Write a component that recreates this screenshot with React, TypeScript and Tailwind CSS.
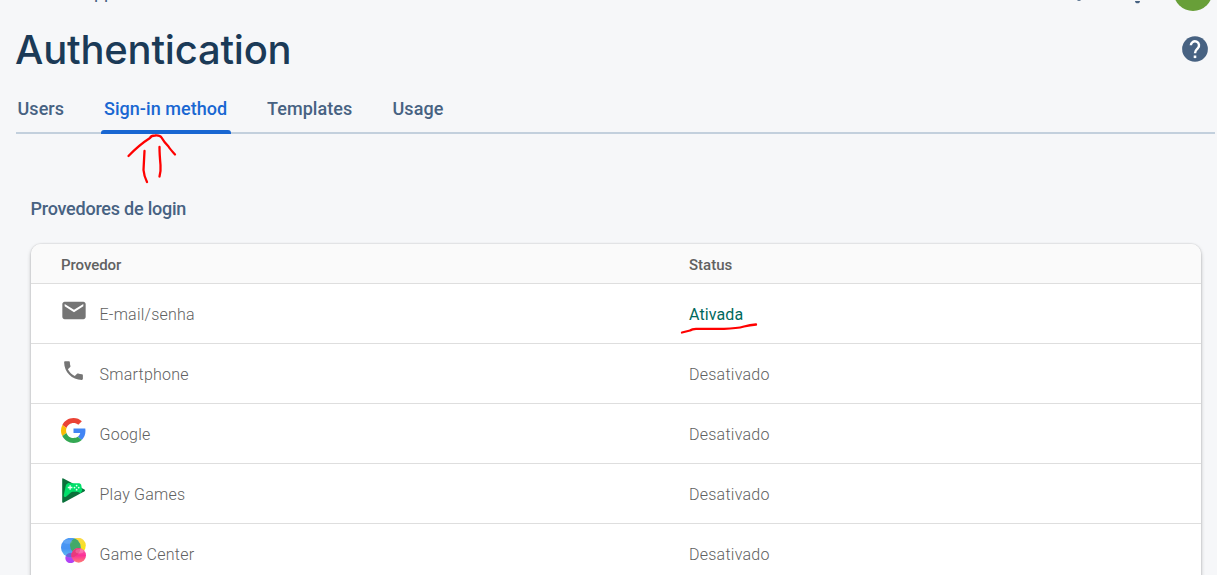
import React from "react";

const tabs = [
  { label: "Users", box: "ml-[1.500px] w-[46.500px]" },
  { label: "Sign-in method", box: "ml-[37px] w-[130px]" },
  { label: "Templates", box: "ml-[36px] w-[86px]" },
  { label: "Usage", box: "ml-[39.500px] w-[52px]" },
];

const MailIcon = () => (
  <svg viewBox="0 0 24 24" className="h-7 w-7" fill="#757575">
    <path d="M20 4H4c-1.1 0-2 .9-2 2v11c0 1.100.9 2 2 2h16c1.100 0 2-.9 2-2V6c0-1.100-.9-2-2-2zm0 4l-8 5-8-5V6l8 5 8-5v2z" />
  </svg>
);

const PhoneIcon = () => (
  <svg viewBox="0 0 24 24" className="h-[25px] w-[25px]" fill="#757575">
    <path d="M6.620 10.790c1.440 2.830 3.760 5.140 6.590 6.590l2.200-2.200c.27-.27.67-.36 1.020-.24 1.120.37 2.330.57 3.570.57.55 0 1 .45 1 1V20c0 .55-.45 1-1 1-9.390 0-17-7.610-17-17 0-.55.45-1 1-1h3.500c.55 0 1 .45 1 1 0 1.250.2 2.450.57 3.570.11.35.03.74-.25 1.020l-2.200 2.200z" />
  </svg>
);

const GoogleIcon = () => (
  <svg viewBox="0 0 48 48" className="h-[25px] w-[25px]">
    <path fill="#EA4335" d="M24 9.500c3.540 0 6.710 1.220 9.210 3.600l6.850-6.850C35.900 2.380 30.470 0 24 0 14.620 0 6.510 5.380 2.560 13.220l7.980 6.190C12.430 13.720 17.740 9.500 24 9.500z" />
    <path fill="#4285F4" d="M46.980 24.550c0-1.570-.15-3.090-.38-4.550H24v9.020h12.940c-.58 2.960-2.260 5.480-4.780 7.180l7.730 6c4.510-4.180 7.090-10.360 7.090-17.650z" />
    <path fill="#FBBC05" d="M10.530 28.590c-.48-1.450-.76-2.990-.76-4.590s.27-3.140.76-4.590l-7.980-6.190C.92 16.460 0 20.120 0 24c0 3.880.92 7.540 2.560 10.780l7.970-6.190z" />
    <path fill="#34A853" d="M24 48c6.480 0 11.930-2.130 15.890-5.810l-7.730-6c-2.150 1.450-4.920 2.300-8.160 2.300-6.260 0-11.570-4.220-13.470-9.910l-7.980 6.190C6.510 42.620 14.620 48 24 48z" />
  </svg>
);

const PlayGamesIcon = () => (
  <svg viewBox="0 0 25 25" className="h-[25px] w-[25px]">
    <path fill="#0b713b" d="M1.200 1Q1.200-.2 2.400.4L23.500 11.500Q24.500 12.400 23.500 13.200L2.400 24.700Q1.200 25 1.200 24Z" />
    <path fill="#00e06a" d="M7 5.200C8 4.700 8.500 5.300 9.500 5.300h7.800c1.200 0 2.200.4 2.900 1.500l1 5.700-1.500 2.400c-1.600.1-2.300-1.200-3.700-1.200h-4.200c-1.500 0-2.300 1.200-3.600 2.400L5 18.700c-1.200.7-2.400 0-2.200-1.800L4.700 7.900c.3-1.300 1.100-2.300 2.300-2.700z" />
    <path stroke="#e7fff2" strokeWidth="1.300" d="M9.100 7.300v4.500M6.800 9.500h4.600" />
    <g fill="#e7fff2">
      <circle cx="15.600" cy="7.600" r=".9" />
      <circle cx="15.600" cy="11.700" r=".9" />
      <circle cx="13.500" cy="9.600" r=".9" />
      <circle cx="17.700" cy="9.600" r=".9" />
    </g>
  </svg>
);

const GameCenterIcon = () => (
  <svg viewBox="0 0 25 25" className="h-[25px] w-[25px]">
    <defs>
      <linearGradient id="blue" x1="0" y1="0" x2="0" y2="1">
        <stop offset="0" stopColor="#4f9cf5" />
        <stop offset=".55" stopColor="#4793f3" />
        <stop offset="1" stopColor="#62c3f5" />
      </linearGradient>
      <linearGradient id="pink" x1="0" y1="0" x2="0" y2="1">
        <stop offset="0" stopColor="#fb68a5" />
        <stop offset=".5" stopColor="#fb2f98" />
        <stop offset="1" stopColor="#ff7e74" />
      </linearGradient>
      <linearGradient id="yellow" x1="0" y1="0" x2="0" y2="1">
        <stop offset="0" stopColor="#f8d84b" />
        <stop offset="1" stopColor="#f7e900" />
      </linearGradient>
      <clipPath id="blueDisc">
        <circle cx="9.800" cy="9.500" r="9.800" />
      </clipPath>
    </defs>
    <circle cx="16.900" cy="7.600" r="7.900" fill="url(#yellow)" />
    <circle cx="9.500" cy="20" r="5.200" fill="#b142f5" />
    <circle cx="9.800" cy="9.500" r="9.800" fill="url(#blue)" />
    <g clipPath="url(#blueDisc)">
      <circle cx="16.900" cy="7.600" r="7.900" fill="#43a969" />
      <circle cx="9.500" cy="20" r="5.200" fill="#6866d8" />
    </g>
    <circle cx="17.700" cy="17.400" r="7.300" fill="url(#pink)" />
    <g clipPath="url(#blueDisc)">
      <circle cx="17.700" cy="17.400" r="7.300" fill="#e83a7c" />
    </g>
    <ellipse cx="18.500" cy="13.300" rx="4" ry="2.200" fill="#fff" opacity=".2" />
    <ellipse cx="7" cy="3.700" rx="4.500" ry="2" fill="#fff" opacity=".12" />
  </svg>
);

const providers = [
  { name: "E-mail/senha", icon: <MailIcon />, enabled: true },
  { name: "Smartphone", icon: <PhoneIcon />, enabled: false },
  { name: "Google", icon: <GoogleIcon />, enabled: false },
  { name: "Play Games", icon: <PlayGamesIcon />, enabled: false },
  { name: "Game Center", icon: <GameCenterIcon />, enabled: false },
];

function TopBar() {
  return (
    <header className="relative h-4 overflow-hidden">
      <span className="absolute left-[94px] top-[-20px] text-[18px] leading-6 text-[#476282]">pp</span>
      <svg className="absolute left-[1068px] top-0 h-4 w-[149px]" viewBox="0 0 149 16">
        <path d="M9.500 0h3v.8h-3z" fill="#476282" />
        <path d="M67 1h5c0 1.500-1 2.300-2.500 2.300S67 2.500 67 1z" fill="#476282" />
        <circle cx="125" cy="-8.500" r="19.500" fill="#689f38" />
      </svg>
    </header>
  );
}

export default function App() {
  return (
    <div className="relative h-[575px] w-full overflow-hidden bg-[#f6f7f9] font-['Roboto',sans-serif]">
      <TopBar />
      <div className="flex h-[66px] items-center justify-between pl-[15px] pr-[9px]">
        <h1 className="whitespace-nowrap pt-px font-['Inter',sans-serif] text-[40px] font-[450] leading-[66px] tracking-[-0.220px] text-[#1b3a57]">Authentication</h1>
        <svg viewBox="2 2 20 20" className="h-[26px] w-[26px]">
          <circle cx="12" cy="12" r="9.900" fill="#476282" />
          <path d="M8.800 9.200a3.150 3.150 0 1 1 5.300 2.300C12.800 12.700 12 13.300 12 15.300" fill="none" stroke="#fff" strokeWidth="1.900" />
          <path d="M11 17h2v2h-2z" fill="#fff" />
        </svg>
      </div>
      <nav className="ml-4 mr-[2px] flex h-[52px] border-b-2 border-[#c3d0dd]">
        {tabs.map((tab, i) => (
          <div key={tab.label} className={`relative h-[52px] shrink-0 whitespace-nowrap ${tab.box}`}>
            <span className={i === 1 ? "block pl-[3px] pt-[15px] text-[18px] font-medium leading-6 tracking-[0.04px] text-[#1967d2]" : "block pt-[15px] text-[18px] font-medium leading-6 tracking-[0.06px] text-[#476282]"}>
              {tab.label}
            </span>
            {i === 1 && <span className="absolute bottom-0 left-0 h-1 w-full rounded-t-[3px] bg-[#1967d2]" />}
          </div>
        ))}
      </nav>
      <h2 className="ml-[30.500px] mt-[63px] text-[18px] font-medium leading-6 tracking-[-0.230px] text-[#476282]">Provedores de login</h2>
      <section className="ml-[31px] mr-4 mt-[23px] h-[400px] overflow-hidden rounded-t-[10px] bg-white shadow-[0_0_2px_rgba(0,0,0,.2),0_2px_4px_rgba(0,0,0,.22)]">
        <div className="flex h-10 items-center border-b border-[#dedede] bg-[#fafafa] pl-[30px] pt-[4px] text-[15px] font-medium text-[#616161]">
          <span className="w-[628px] tracking-[-0.06px]">Provedor</span>
          <span>Status</span>
        </div>
        {providers.map((p) => (
          <div key={p.name} className="flex h-[60px] border-b border-[#dedede] pl-[30px] text-[16px] font-light leading-[62px] tracking-[0.240px] text-[#616161]">
            <div className="mt-[14px] flex h-[25px] w-[25px] items-center justify-center [&>svg]:shrink-0">{p.icon}</div>
            <span className="ml-[13.500px] w-[589.500px]">{p.name}</span>
            {p.enabled ? <span className="font-normal tracking-[0.120px] text-[#00695c]">Ativada</span> : <span>Desativado</span>}
          </div>
        ))}
      </section>
      <svg className="pointer-events-none absolute left-0 top-0 h-[575px] w-[1217px]" viewBox="0 0 1217 575" fill="none" stroke="#ff0000" strokeWidth="2.300" strokeLinecap="round" strokeLinejoin="round">
        <path d="M128.500 156Q139 145 150 138Q151 135.500 155 135.500Q160 135 161.500 137.500Q164 142 168.500 146.500Q170 149 175 154.500" />
        <path d="M144.500 151Q144 161 143.500 170Q144 176 147 182M159.500 147Q159.500 154 160.500 165Q161 171 159.500 176.500" />
        <path d="M682 332.500L690 330.500Q692 329 696 328.800H724Q737 328.500 744 326.500Q750 325 756 324.500" />
      </svg>
    </div>
  );
}
